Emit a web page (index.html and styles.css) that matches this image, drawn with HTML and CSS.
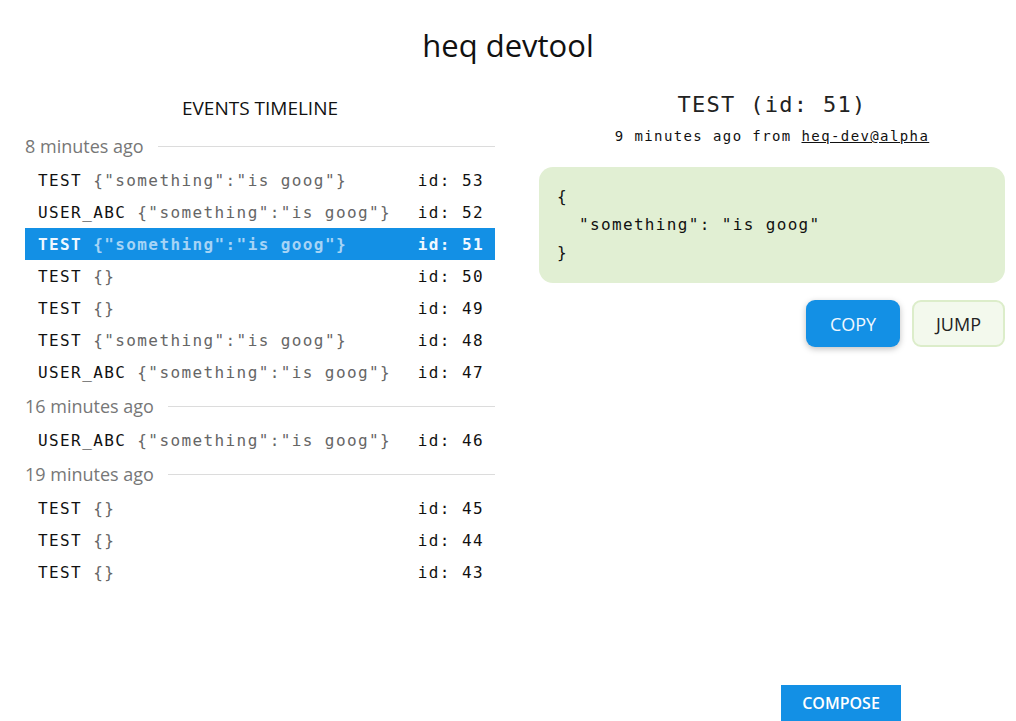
FILE: index.html
```html
<!DOCTYPE html>
<html>
<head>
<meta charset="utf-8">
<link rel="stylesheet" href="styles.css">
</head>
<body>
<h1 class="title">heq devtool</h1>
<main class="layout">
  <section class="timeline">
    <h2 class="timeline-title">EVENTS TIMELINE</h2>
    <div class="group-head"><span>8 minutes ago</span><span class="rule"></span></div>
    <div class="row"><span><span class="type">TEST</span> <span class="payload">{"something":"is goog"}</span></span><span class="id">id: 53</span></div>
    <div class="row"><span><span class="type">USER_ABC</span> <span class="payload">{"something":"is goog"}</span></span><span class="id">id: 52</span></div>
    <div class="row active"><span><span class="type">TEST</span> <span class="payload">{"something":"is goog"}</span></span><span class="id">id: 51</span></div>
    <div class="row"><span><span class="type">TEST</span> <span class="payload">{}</span></span><span class="id">id: 50</span></div>
    <div class="row"><span><span class="type">TEST</span> <span class="payload">{}</span></span><span class="id">id: 49</span></div>
    <div class="row"><span><span class="type">TEST</span> <span class="payload">{"something":"is goog"}</span></span><span class="id">id: 48</span></div>
    <div class="row"><span><span class="type">USER_ABC</span> <span class="payload">{"something":"is goog"}</span></span><span class="id">id: 47</span></div>
    <div class="group-head"><span>16 minutes ago</span><span class="rule"></span></div>
    <div class="row"><span><span class="type">USER_ABC</span> <span class="payload">{"something":"is goog"}</span></span><span class="id">id: 46</span></div>
    <div class="group-head"><span>19 minutes ago</span><span class="rule"></span></div>
    <div class="row"><span><span class="type">TEST</span> <span class="payload">{}</span></span><span class="id">id: 45</span></div>
    <div class="row"><span><span class="type">TEST</span> <span class="payload">{}</span></span><span class="id">id: 44</span></div>
    <div class="row"><span><span class="type">TEST</span> <span class="payload">{}</span></span><span class="id">id: 43</span></div>
  </section>
  <section class="detail">
    <h2 class="detail-title">TEST (id: 51)</h2>
    <p class="detail-sub">9 minutes ago from <a class="source" href="#">heq-dev@alpha</a></p>
    <pre class="json">{
  "something": "is goog"
}</pre>
    <div class="actions">
      <button class="btn btn-copy">COPY</button>
      <button class="btn btn-jump">JUMP</button>
    </div>
  </section>
</main>
<button class="compose">COMPOSE</button>
</body>
</html>
```

FILE: styles.css
```css
* { box-sizing: border-box; }
html, body { margin: 0; padding: 0; background: #fff; }
body {
  font-family: "Open Sans", "Noto Sans", sans-serif;
  color: #111;
  width: 1016px;
  height: 721px;
  overflow: hidden;
}
.title {
  margin: 0;
  padding-top: 24px;
  height: 84px;
  font-size: 31px;
  font-weight: 400;
  line-height: 42px;
  text-align: center;
}
.layout {
  display: grid;
  grid-template-columns: 470px 466px;
  column-gap: 44px;
  padding-left: 25px;
}
.timeline-title {
  margin: 0;
  height: 44px;
  padding-top: 12px;
  font-size: 19px;
  font-weight: 400;
  line-height: 24px;
  text-align: center;
}
.group-head {
  display: flex;
  align-items: center;
  gap: 14px;
  height: 36px;
  font-size: 18px;
  color: #777;
}
.rule {
  flex: 1;
  height: 1px;
  background: #dcdcdc;
}
.row {
  display: flex;
  justify-content: space-between;
  align-items: center;
  height: 32px;
  padding: 0 11px 0 13px;
  font-family: "DejaVu Sans Mono", "Liberation Mono", monospace;
  font-size: 16px;
  letter-spacing: 1.4px;
  color: #111;
}
.payload { color: #666; }
.row.active { background: #1390e5; color: #eef7fe; }
.row.active .type, .row.active .id { font-weight: 700; color: #f0f8ff; }
.row.active .payload { color: #a6d4f6; font-weight: 700; }
.detail { display: flex; flex-direction: column; }
.detail-title {
  margin: 0;
  padding-top: 6px;
  height: 41px;
  font-family: "DejaVu Sans Mono", "Liberation Mono", monospace;
  font-size: 22px;
  font-weight: 400;
  letter-spacing: 1.3px;
  line-height: 30px;
  text-align: center;
  color: #222;
}
.detail-sub {
  margin: 0;
  height: 42px;
  font-family: "DejaVu Sans Mono", "Liberation Mono", monospace;
  font-size: 14px;
  letter-spacing: 1.4px;
  line-height: 22px;
  text-align: center;
  color: #111;
}
.source { color: #111; text-decoration: underline; }
.json {
  margin: 0;
  padding: 16px 18px 16px;
  background: #e1efd3;
  border-radius: 14px;
  font-family: "DejaVu Sans Mono", "Liberation Mono", monospace;
  font-size: 16px;
  letter-spacing: 1.35px;
  line-height: 28px;
  color: #111;
}
.actions {
  display: flex;
  justify-content: flex-end;
  gap: 12px;
  margin-top: 17px;
}
.btn {
  height: 47px;
  width: 94px;
  font-family: "Open Sans", "Noto Sans", sans-serif;
  font-size: 18px;
  border-radius: 9px;
  cursor: pointer;
}
.btn-copy {
  background: #1390e5;
  color: #f0f8ff;
  border: none;
  box-shadow: 0 2px 6px rgba(0, 0, 0, 0.25);
}
.btn-jump {
  width: 93px;
  background: #f3f9ed;
  color: #222;
  border: 2px solid #dcedca;
}
.compose {
  position: fixed;
  left: 781px;
  bottom: 0;
  width: 120px;
  height: 36px;
  border: none;
  background: #1390e5;
  color: #fff;
  font-family: "Open Sans", "Noto Sans", sans-serif;
  font-size: 16px;
  font-weight: 600;
  padding: 0;
}
```
